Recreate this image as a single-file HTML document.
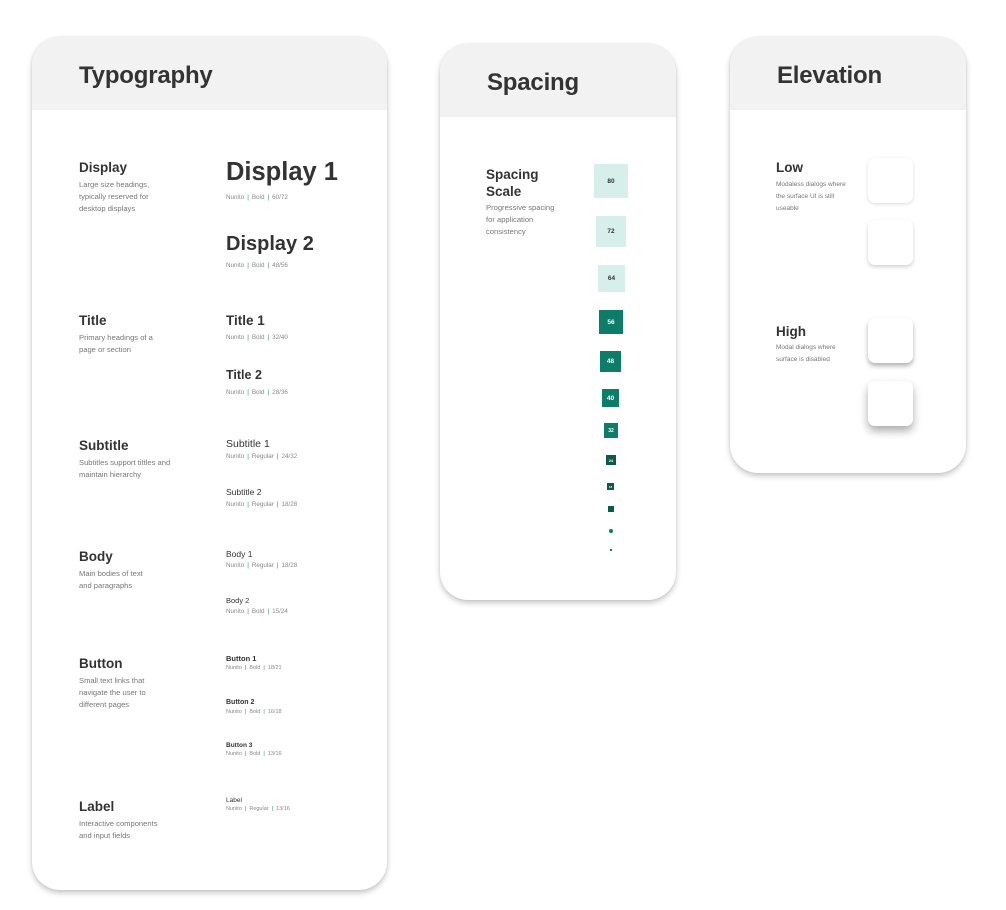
<!DOCTYPE html>
<html><head><meta charset="utf-8"><style>
body{margin:0;width:1006px;height:910px;background:#fff;position:relative;overflow:hidden;font-family:"Liberation Sans",sans-serif;color:#333}
.card{position:absolute;background:#fff;border-radius:28px;overflow:hidden;box-shadow:0 3px 6px rgba(0,0,0,.22),0 0 2px rgba(0,0,0,.08)}
.hd{position:absolute;left:0;top:0;right:0;background:#f2f2f2}
.t{position:absolute;white-space:nowrap}
.h{font-weight:bold;font-size:24px;letter-spacing:-.2px}
.s{font-weight:bold;font-size:13.5px}
.d{font-size:7.6px;color:#777;line-height:12px;white-space:normal}
.m{font-size:6.3px;color:#888}
.m i{font-style:normal;color:#1b8a74;padding:0 3px}
.sq{position:absolute;font-size:6.5px;font-weight:bold;display:flex;align-items:center;justify-content:center}
.l{background:#d6efea;color:#333}
.g{background:#0d7c68;color:#fff}
.k{background:#0b5a4b;color:#fff}
.b{position:absolute;left:138px;width:45px;height:45px;border-radius:7px;background:#fff}
</style></head><body>
<div class="card" style="left:32px;top:37px;width:355px;height:853px">
<div class="hd" style="height:73px"></div>
<div class="t h" style="left:47px;top:25px">Typography</div>
<div class="t s" style="left:47px;top:123px">Display</div>
<div class="t d" style="left:47px;top:142px;width:82px">Large size headings, typically reserved for desktop displays</div>
<div class="t" style="left:194px;top:121px;font-size:25.5px;font-weight:bold">Display 1</div>
<div class="t m" style="left:194px;top:157px">Nunito<i>|</i>Bold<i>|</i>60/72</div>
<div class="t" style="left:194px;top:196px;font-size:20px;font-weight:bold">Display 2</div>
<div class="t m" style="left:194px;top:225px">Nunito<i>|</i>Bold<i>|</i>48/56</div>
<div class="t s" style="left:47px;top:276px">Title</div>
<div class="t d" style="left:47px;top:295px;width:82px">Primary headings of a page or section</div>
<div class="t" style="left:194px;top:276px;font-size:13.5px;font-weight:bold">Title 1</div>
<div class="t m" style="left:194px;top:297px">Nunito<i>|</i>Bold<i>|</i>32/40</div>
<div class="t" style="left:194px;top:331px;font-size:12.5px;font-weight:bold">Title 2</div>
<div class="t m" style="left:194px;top:352px">Nunito<i>|</i>Bold<i>|</i>28/36</div>
<div class="t s" style="left:47px;top:401px">Subtitle</div>
<div class="t d" style="left:47px;top:420px;width:92px">Subtitles support tittles and maintain hierarchy</div>
<div class="t" style="left:194px;top:401px;font-size:10.5px">Subtitle 1</div>
<div class="t m" style="left:194px;top:416px">Nunito<i>|</i>Regular<i>|</i>24/32</div>
<div class="t" style="left:194px;top:450px;font-size:8.5px">Subtitle 2</div>
<div class="t m" style="left:194px;top:464px">Nunito<i>|</i>Regular<i>|</i>18/28</div>
<div class="t s" style="left:47px;top:512px">Body</div>
<div class="t d" style="left:47px;top:531px;width:72px">Main bodies of text and paragraphs</div>
<div class="t" style="left:194px;top:512px;font-size:8.5px">Body 1</div>
<div class="t m" style="left:194px;top:525px">Nunito<i>|</i>Regular<i>|</i>18/28</div>
<div class="t" style="left:194px;top:559px;font-size:7.5px">Body 2</div>
<div class="t m" style="left:194px;top:571px">Nunito<i>|</i>Bold<i>|</i>15/24</div>
<div class="t s" style="left:47px;top:619px">Button</div>
<div class="t d" style="left:47px;top:638px;width:82px">Small text links that navigate the user to different pages</div>
<div class="t" style="left:194px;top:617px;font-size:7.5px;font-weight:bold">Button 1</div>
<div class="t m" style="left:194px;top:628px;font-size:5.5px">Nunito<i>|</i>Bold<i>|</i>18/21</div>
<div class="t" style="left:194px;top:662px;font-size:7px;font-weight:bold">Button 2</div>
<div class="t m" style="left:194px;top:672px;font-size:5.5px">Nunito<i>|</i>Bold<i>|</i>16/18</div>
<div class="t" style="left:194px;top:705px;font-size:6.5px;font-weight:bold">Button 3</div>
<div class="t m" style="left:194px;top:714px;font-size:5.5px">Nunito<i>|</i>Bold<i>|</i>13/16</div>
<div class="t s" style="left:47px;top:762px">Label</div>
<div class="t d" style="left:47px;top:781px;width:92px">Interactive components and input fields</div>
<div class="t" style="left:194px;top:760px;font-size:6.5px">Label</div>
<div class="t m" style="left:194px;top:769px;font-size:5.5px">Nunito<i>|</i>Regular<i>|</i>13/16</div>
</div>

<div class="card" style="left:440px;top:44px;width:236px;height:556px">
<div class="hd" style="height:73px"></div>
<div class="t h" style="left:47px;top:25px">Spacing</div>
<div class="t s" style="left:46px;top:122px;line-height:17px">Spacing<br>Scale</div>
<div class="t d" style="left:46px;top:158px;width:75px">Progressive spacing for application consistency</div>
<div class="sq l" style="left:154px;top:120px;width:34px;height:34px">80</div>
<div class="sq l" style="left:156px;top:172px;width:30px;height:31px">72</div>
<div class="sq l" style="left:158px;top:221px;width:27px;height:27px">64</div>
<div class="sq g" style="left:159px;top:266px;width:24px;height:24px">56</div>
<div class="sq g" style="left:160px;top:307px;width:21px;height:21px">48</div>
<div class="sq g" style="left:162px;top:345px;width:17px;height:18px">40</div>
<div class="sq g" style="left:164px;top:379px;width:14px;height:15px;font-size:5px">32</div>
<div class="sq k" style="left:166px;top:411px;width:10px;height:10px;font-size:4px">24</div>
<div class="sq k" style="left:167px;top:439px;width:7px;height:7px;font-size:3px">16</div>
<div class="sq k" style="left:168px;top:462px;width:6px;height:6px"></div>
<div class="sq g" style="left:169px;top:485px;width:4px;height:4px;border-radius:2px"></div>
<div class="sq g" style="left:170px;top:505px;width:2px;height:2px"></div>
</div>

<div class="card" style="left:730px;top:37px;width:236px;height:436px">
<div class="hd" style="height:73px"></div>
<div class="t h" style="left:47px;top:25px">Elevation</div>
<div class="t s" style="left:46px;top:123px">Low</div>
<div class="t d" style="left:46px;top:142px;width:80px;font-size:6.5px;line-height:12px">Modaless dialogs where the surface UI is still useable</div>
<div class="b" style="top:121px;box-shadow:0 1px 3px rgba(0,0,0,.15)"></div>
<div class="b" style="top:183px;box-shadow:0 2px 4px rgba(0,0,0,.18)"></div>
<div class="t s" style="left:46px;top:287px">High</div>
<div class="t d" style="left:46px;top:305px;width:70px;font-size:6.5px;line-height:12px">Modal dialogs where surface is disabled</div>
<div class="b" style="top:281px;box-shadow:0 3px 5px rgba(0,0,0,.3)"></div>
<div class="b" style="top:344px;box-shadow:0 5px 9px rgba(0,0,0,.33)"></div>
</div>
</body></html>
